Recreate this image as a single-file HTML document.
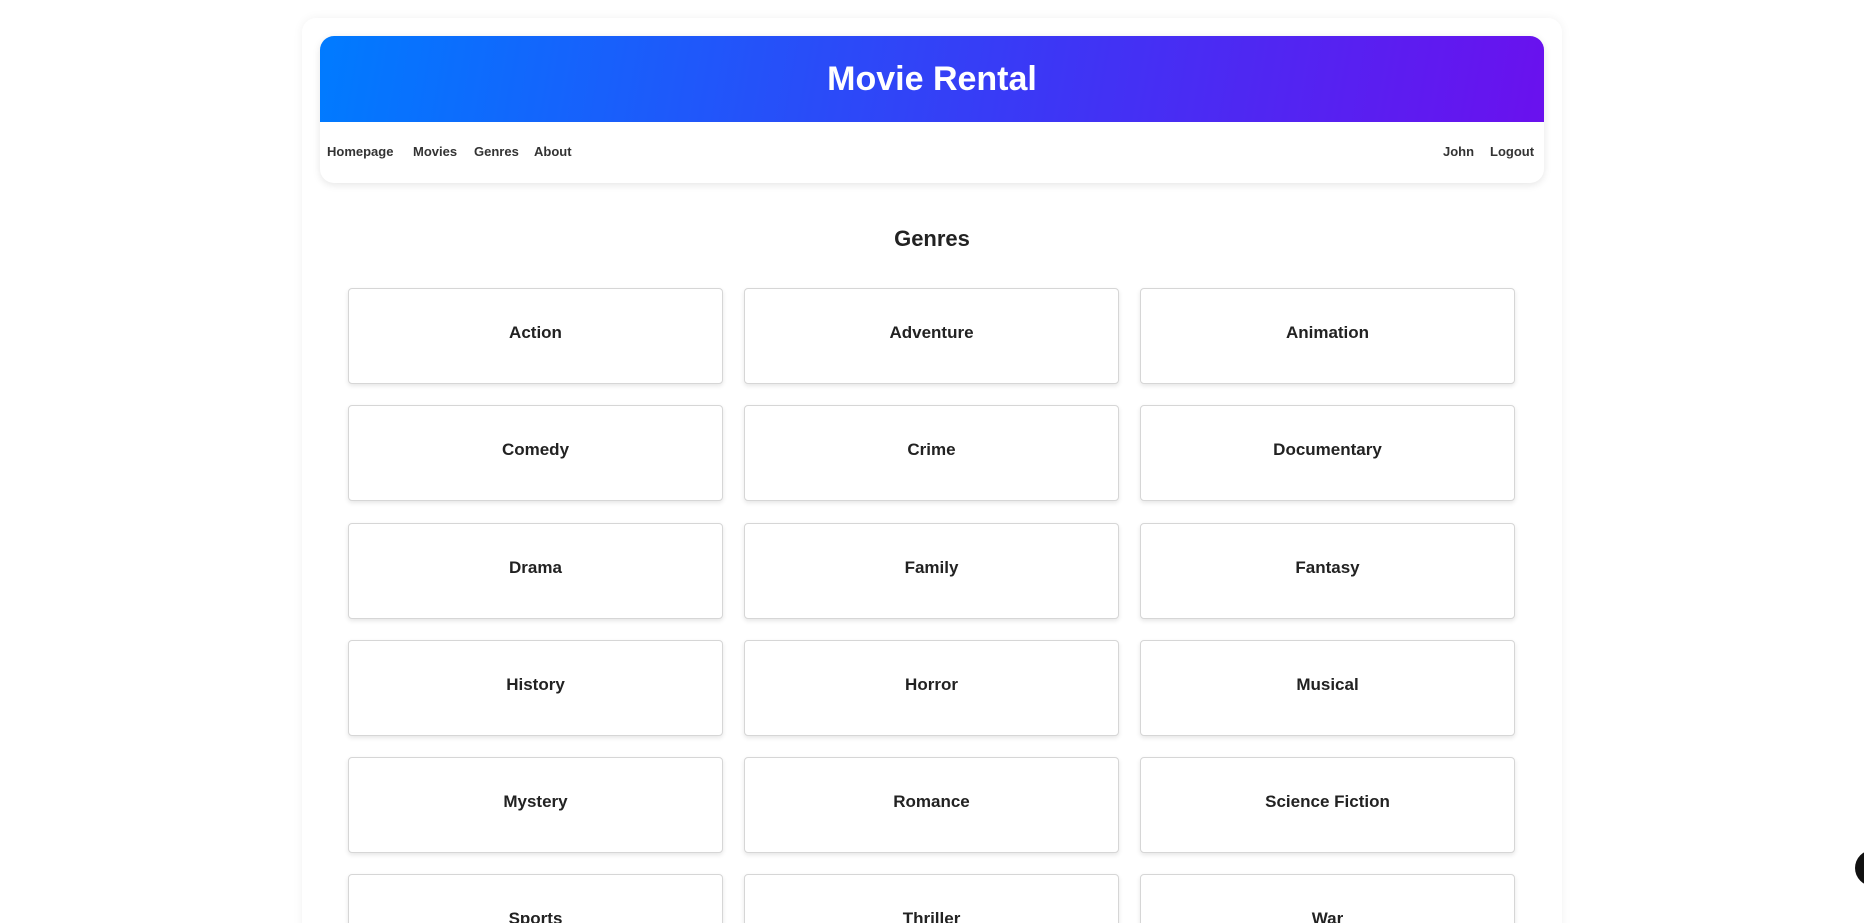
<!DOCTYPE html>
<html><head><meta charset="utf-8"><style>
html,body{margin:0;padding:0;background:#fff;width:1864px;height:923px;overflow:hidden;font-family:"Liberation Sans",sans-serif;color:#222}
.wrap{position:relative;width:1864px;height:923px;overflow:hidden}
.panel{position:absolute;left:302px;top:18px;width:1260px;height:940px;background:#fff;border-radius:14px;box-shadow:0 0 10px rgba(0,0,0,0.06)}
.hdrbox{position:absolute;left:320px;top:36px;width:1224px;height:147px;border-radius:14px;box-shadow:0 2px 8px rgba(0,0,0,0.1);background:#fff}
.hdr{height:86px;border-radius:14px 14px 0 0;background:linear-gradient(100deg,#007bff 0%,#3d36f5 60%,#6a11ee 100%);color:#fff;text-align:center;font-size:34px;font-weight:bold;line-height:86px}
.nav{position:relative;height:61px;font-size:13px;font-weight:bold;color:#333}
.nav span{position:absolute;top:22px}
h2{position:absolute;left:302px;width:1260px;top:226px;margin:0;text-align:center;font-size:22px;font-weight:bold;color:#222}
.card{position:absolute;width:373px;height:94px;border:1px solid #d6d6d6;border-radius:4px;box-shadow:0 2px 5px rgba(0,0,0,0.1);background:#fff;text-align:center;line-height:88px;font-size:17px;font-weight:bold;color:#222}
.dot{position:absolute;left:1855px;top:850px;width:36px;height:36px;border-radius:50%;background:#111}
</style></head><body><div class="wrap">
<div class="panel"></div>
<div class="hdrbox"><div class="hdr">Movie Rental</div>
<div class="nav"><span style="left:7px">Homepage</span><span style="left:93px">Movies</span><span style="left:154px">Genres</span><span style="left:214px">About</span><span style="left:1123px">John</span><span style="left:1170px">Logout</span></div></div>
<h2>Genres</h2>
<div class="card" style="left:348px;top:288px">Action</div>
<div class="card" style="left:744px;top:288px">Adventure</div>
<div class="card" style="left:1140px;top:288px">Animation</div>
<div class="card" style="left:348px;top:405px">Comedy</div>
<div class="card" style="left:744px;top:405px">Crime</div>
<div class="card" style="left:1140px;top:405px">Documentary</div>
<div class="card" style="left:348px;top:523px">Drama</div>
<div class="card" style="left:744px;top:523px">Family</div>
<div class="card" style="left:1140px;top:523px">Fantasy</div>
<div class="card" style="left:348px;top:640px">History</div>
<div class="card" style="left:744px;top:640px">Horror</div>
<div class="card" style="left:1140px;top:640px">Musical</div>
<div class="card" style="left:348px;top:757px">Mystery</div>
<div class="card" style="left:744px;top:757px">Romance</div>
<div class="card" style="left:1140px;top:757px">Science Fiction</div>
<div class="card" style="left:348px;top:874px">Sports</div>
<div class="card" style="left:744px;top:874px">Thriller</div>
<div class="card" style="left:1140px;top:874px">War</div>
<div class="dot"></div>
</div></body></html>
